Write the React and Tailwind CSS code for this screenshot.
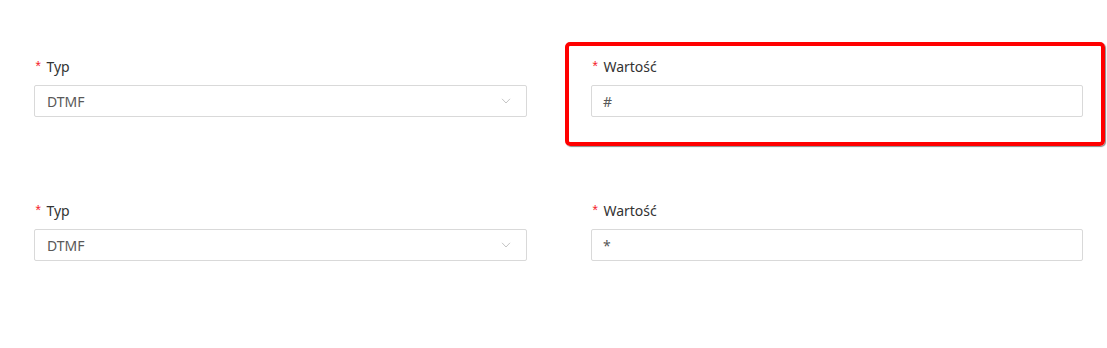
import React from "react";

const rows = [
  { typ: "DTMF", value: "#", highlight: true },
  { typ: "DTMF", value: "*", highlight: false },
];

const Label = ({ children }) => (
  <div className="flex items-center h-[22px] mb-[8px] text-[14px] text-[#333]">
    <span
      className="text-[#f5222d] mr-[4px] text-[14px] leading-none translate-y-[2px]"
      style={{ fontFamily: '"Liberation Mono", monospace' }}
    >
      *
    </span>
    {children}
  </div>
);

const Chevron = () => (
  <svg width="10" height="6" viewBox="0 0 10 6" fill="none" className="text-[#c4c4c4]">
    <path d="M1 0.8 L5 5 L9 0.8" stroke="currentColor" strokeWidth="1" />
  </svg>
);

const App = () => {
  return (
    <div
      className="w-[1107px] h-[348px] bg-white pt-[55px] pl-[34px]"
      style={{ fontFamily: '"Noto Sans", "Open Sans", sans-serif' }}
    >
      <div className="flex flex-col gap-[82px] w-[1049px]">
        {rows.map((row, i) => (
          <div key={i} className="grid grid-cols-[493px_492px] gap-x-[64px]">
            <div>
              <Label>Typ</Label>
              <div className="flex items-center justify-between h-[32px] border border-[#d9d9d9] rounded-[2px] pl-[12px] pr-[15px] text-[14px] text-[#595959]">
                <span>{row.typ}</span>
                <Chevron />
              </div>
            </div>
            <div className="relative">
              {row.highlight && (
                <div className="absolute left-[-26px] top-[-13px] w-[540px] h-[104px] border-[4px] border-[#ff0000] rounded-[5px] shadow-[1px_1px_1px_rgba(0,0,0,0.45)] pointer-events-none" />
              )}
              <Label>Wartość</Label>
              <div className="flex items-center h-[32px] border border-[#d9d9d9] rounded-[2px] pl-[11px] text-[14px] text-[#595959]">
                {row.value}
              </div>
            </div>
          </div>
        ))}
      </div>
    </div>
  );
};

export default App;
